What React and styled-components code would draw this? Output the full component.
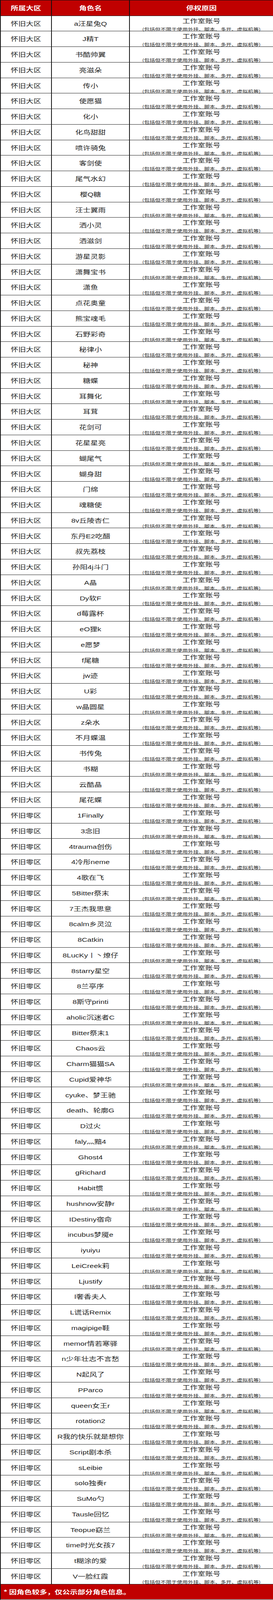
import React, { useEffect, useState } from 'react';
import styled, { createGlobalStyle } from 'styled-components';

const DESIGN_HEIGHT = 5484;

const GlobalStyle = createGlobalStyle`
  html, body {
    margin: 0;
    padding: 0;
    background: #ffffff;
  }
  body {
    font-family: "Liberation Sans", "Noto Sans CJK SC", sans-serif;
  }
`;

/* The sheet is drawn for a 5484px tall window; if the window is shorter,
   everything vertical is compressed by --k so the whole list stays visible. */
function readScale() {
  if (typeof window === 'undefined') return 1;
  return Math.min(1, window.innerHeight / DESIGN_HEIGHT);
}

function useFitScale() {
  const [k, setK] = useState(readScale);
  useEffect(() => {
    const onResize = () => setK(readScale());
    window.addEventListener('resize', onResize);
    return () => window.removeEventListener('resize', onResize);
  }, []);
  return k;
}

const Sheet = styled.div`
  width: 700px;
  height: calc(${DESIGN_HEIGHT}px * var(--k, 1));
  box-sizing: border-box;
  display: grid;
  grid-template-rows: 53fr repeat(101, 53.23fr) 51.5fr;
  border-left: 2px solid #111;
  border-top: 1px solid #111;
  border-bottom: 2px solid #9a9a9a;
  overflow: hidden;
`;

const FitText = styled.span`
  display: inline-block;
  white-space: nowrap;
  transform: scaleY(var(--k, 1));
`;

const HeadRow = styled.div`
  display: grid;
  grid-template-columns: 131px 200px 1fr;
  min-height: 0;
  box-sizing: border-box;
  border-bottom: 1px solid #1c1c1c;
  background: #c00000;
`;

const HeadCell = styled.div`
  display: flex;
  align-items: center;
  justify-content: center;
  min-height: 0;
  border-right: ${(p) => (p.$last ? 'none' : '2px solid #111')};
  color: #ffffff;
  font-family: "Noto Sans CJK SC", sans-serif;
  font-weight: 700;
  font-size: 19.5px;
  line-height: 24px;
`;

const Row = styled.div`
  display: grid;
  grid-template-columns: 131px 200px 1fr;
  min-height: 0;
  box-sizing: border-box;
  border-bottom: 1px solid #222;
  background: #ffffff;
`;

const Cell = styled.div`
  display: flex;
  align-items: center;
  justify-content: center;
  min-height: 0;
  padding-top: calc(2px * var(--k, 1));
  border-right: 2px solid #111;
  color: #1e1e1e;
  font-size: 19.5px;
  line-height: 24px;
`;

const ReasonCell = styled.div`
  display: flex;
  justify-content: center;
  align-items: flex-start;
  min-height: 0;
  color: #1e1e1e;
`;

const ReasonStack = styled.div`
  display: flex;
  flex-direction: column;
  align-items: center;
  padding-top: 4px;
  white-space: nowrap;
  transform: scaleY(var(--k, 1));
  transform-origin: top center;
`;

const ReasonMain = styled.div`
  font-size: 19.5px;
  line-height: 26px;
`;

const ReasonNote = styled.div`
  margin-top: 8px;
  font-family: "Noto Sans CJK SC", sans-serif;
  font-size: 14px;
  line-height: 14px;
  color: #2a2a2a;
`;

const Footer = styled.div`
  display: flex;
  align-items: center;
  min-height: 0;
  padding-left: 7px;
  background: #c00000;
  color: #ffffff;
  font-family: "Noto Sans CJK SC", sans-serif;
  font-weight: 700;
  font-size: 19.5px;
  line-height: 24px;
`;

const bigZone = [
  'a汪星兔Q', 'J精T', '书酷帅翼', '亮滋朵', '传小', '使愿猫', '化小', '化鸟甜甜',
  '喷许骑兔', '客剑使', '尾气水幻', '樱Q糖', '汪士翼雨', '洒小灵', '洒滋剑', '游星灵影',
  '潇舞宝书', '潇鱼', '点花奥童', '熊宝魂毛', '石野彩奇', '秘律小', '秘神', '糖蝶',
  '耳舞化', '耳茸', '花剑可', '花星星亮', '蝴尾气', '蝴身甜', '门绵', '魂糖使',
  '8v丘陵杏仁', '东丹E2吃醋', '叔先荔枝', '孙阳4j斗门', 'A晶', 'Dy软F', 'd莓露杯', 'eO狸k',
  'e愿梦', 'f尾糖', 'jw迹', 'U彩', 'w晶圆星', 'z朵水', '不月蝶温', '书传兔',
  '书糊', '云酷晶', '尾花蝶',
];

const zeroZone = [
  '1Finally', '3念旧', '4trauma创伤', '4冷彤neme', '4歌在飞', '5Bitter祭末', '7王杰我思意',
  '8calm乡灵泣', '8Catkin', '8LucKy丨丶燎仔', '8starry星空', '8兰亭序', '8斯守printi',
  'aholic沉迷者C', 'Bitter祭末1', 'Chaos云', 'Charm猫猫SA', 'Cupid爱神华', 'cyuke、梦王驰',
  'death、轮廓G', 'D过火', 'faly灬黯4', 'Ghost4', 'gRichard', 'Habit惯', 'hushnow安静r',
  'IDestiny宿命', 'incubus梦魇e', 'iyuiyu', 'LeiCreek莉', 'Ljustify', 'l奢香夫人',
  'L谎话Remix', 'magipige鞋', 'memor情若寒驿', 'n少年壮志不言愁', 'N起风了', 'PParco',
  'queen女王r', 'rotation2', 'R我的快乐就是想你', 'Script剧本杀', 'sLeibie', 'solo独奏r',
  'SuMo勺', 'Tausle回忆', 'Teopue窈兰', 'time时光女孩7', 't糊涂的爱', 'V一脸红霞',
];

const rows = [
  ...bigZone.map((name) => ({ zone: '怀旧大区', name })),
  ...zeroZone.map((name) => ({ zone: '怀旧零区', name })),
];

export default function App() {
  const k = useFitScale();
  return (
    <>
      <GlobalStyle />
      <Sheet style={{ '--k': k }}>
        <HeadRow>
          <HeadCell><FitText>所属大区</FitText></HeadCell>
          <HeadCell><FitText>角色名</FitText></HeadCell>
          <HeadCell $last><FitText>停权原因</FitText></HeadCell>
        </HeadRow>
        {rows.map((r, i) => (
          <Row key={i}>
            <Cell><FitText>{r.zone}</FitText></Cell>
            <Cell><FitText>{r.name}</FitText></Cell>
            <ReasonCell>
              <ReasonStack>
                <ReasonMain>工作室账号</ReasonMain>
                <ReasonNote>(包括但不限于使用外挂、脚本、多开、虚拟机等)</ReasonNote>
              </ReasonStack>
            </ReasonCell>
          </Row>
        ))}
        <Footer><FitText>* 因角色较多，仅公示部分角色信息。</FitText></Footer>
      </Sheet>
    </>
  );
}
